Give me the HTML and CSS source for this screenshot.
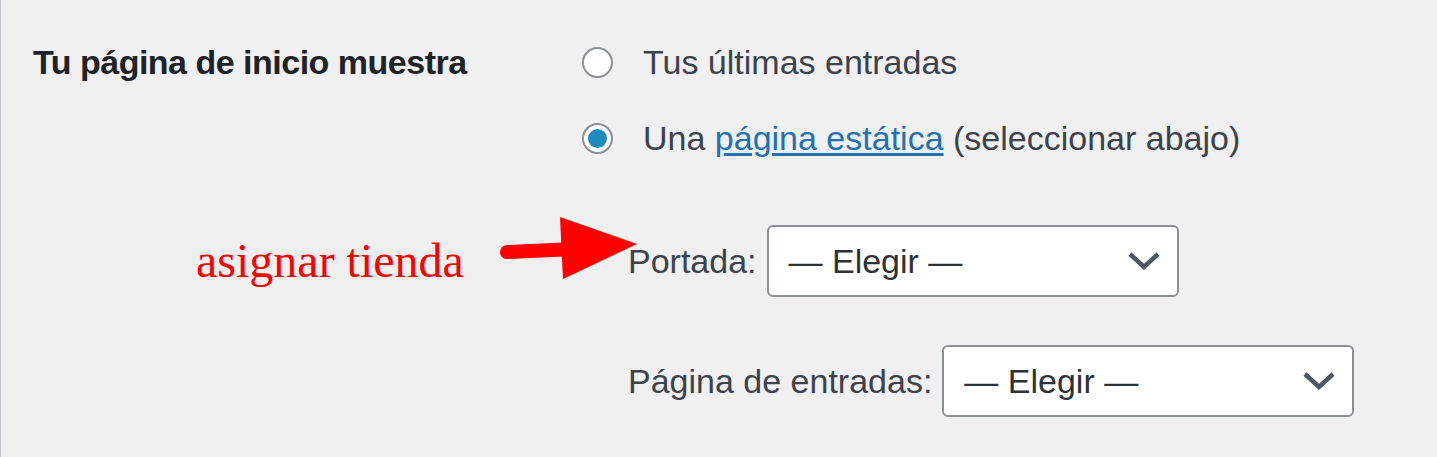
FILE: index.html
```html
<!DOCTYPE html>
<html lang="es">
<head>
    <meta charset="UTF-8">
    <meta name="viewport" content="width=device-width, initial-scale=1.0">
    <title>Ajustes de lectura</title>
    <link rel="stylesheet" href="styles.css">
</head>
<body>
    <div class="wrap">
        <div class="setting">
            <div class="setting-label">Tu página de inicio muestra</div>
            <div class="setting-field">
                <label class="choice"><span class="radio"></span>Tus últimas entradas</label>
                <label class="choice"><span class="radio checked"></span>Una&nbsp;<a href="#">página estática</a>&nbsp;(seleccionar abajo)</label>
                <ul class="page-selects">
                    <li>
                        <label>Portada:</label>
                        <div class="select">
                            <span>— Elegir —</span>
                            <svg width="34" height="20" viewBox="0 0 34 20"><path d="M3 3 L17 16 L31 3" fill="none" stroke="#50575e" stroke-width="4.5"/></svg>
                        </div>
                    </li>
                    <li>
                        <label>Página de entradas:</label>
                        <div class="select">
                            <span>— Elegir —</span>
                            <svg width="34" height="20" viewBox="0 0 34 20"><path d="M3 3 L17 16 L31 3" fill="none" stroke="#50575e" stroke-width="4.5"/></svg>
                        </div>
                    </li>
                </ul>
            </div>
        </div>

        <!-- anotación -->
        <div class="note">asignar tienda</div>
        <svg class="arrow" width="160" height="80" viewBox="0 0 160 80">
            <line x1="17" y1="42" x2="74" y2="39.5" stroke="#ff0000" stroke-width="14" stroke-linecap="round"/>
            <polygon points="70,7 147,34 73,69" fill="#ff0000"/>
        </svg>
    </div>
</body>
</html>
```

FILE: styles.css
```css
body {
    margin: 0;
    background-color: #f0f0f1;
    font-family: "Liberation Sans", Arial, sans-serif;
    color: #3c434a;
}

.wrap {
    position: relative;
    height: 457px;
    box-sizing: border-box;
    border-left: 1px solid #c3c4c7;
    padding: 42px 0 0 32px;
}

.setting {
    display: grid;
    grid-template-columns: 549px 1fr;
}

.setting-label {
    font-size: 34px;
    font-weight: bold;
    letter-spacing: -0.5px;
    line-height: 40px;
    color: #1d2327;
}

.choice {
    display: flex;
    align-items: center;
    height: 40px;
    font-size: 34px;
    line-height: 40px;
    white-space: nowrap;
}

.choice + .choice {
    margin-top: 36px;
}

.choice a {
    color: #2271b1;
    text-decoration: underline;
    text-underline-offset: 3px;
}

.radio {
    width: 31px;
    height: 31px;
    box-sizing: border-box;
    border: 2px solid #8c8f94;
    border-radius: 50%;
    background-color: #fff;
    margin-right: 30px;
    display: flex;
    align-items: center;
    justify-content: center;
    flex-shrink: 0;
}

.radio.checked::before {
    content: "";
    width: 19px;
    height: 19px;
    border-radius: 50%;
    background-color: #1e8cbe;
}

.page-selects {
    list-style: none;
    margin: 67px 0 0 46px;
    padding: 0;
    display: flex;
    flex-direction: column;
    gap: 48px;
}

.page-selects li {
    display: flex;
    align-items: center;
    gap: 10px;
    font-size: 34px;
}

.select {
    width: 412px;
    height: 72px;
    box-sizing: border-box;
    border: 2px solid #8c8f94;
    border-radius: 6px;
    background-color: #fff;
    color: #2c3338;
    display: flex;
    align-items: center;
    justify-content: space-between;
    padding: 0 16px 0 20px;
}

.note {
    position: absolute;
    left: 195px;
    top: 237px;
    font-family: "Liberation Serif", "Times New Roman", serif;
    font-size: 48px;
    line-height: 48px;
    color: #ff0000;
}

.arrow {
    position: absolute;
    left: 489px;
    top: 210px;
}
```
